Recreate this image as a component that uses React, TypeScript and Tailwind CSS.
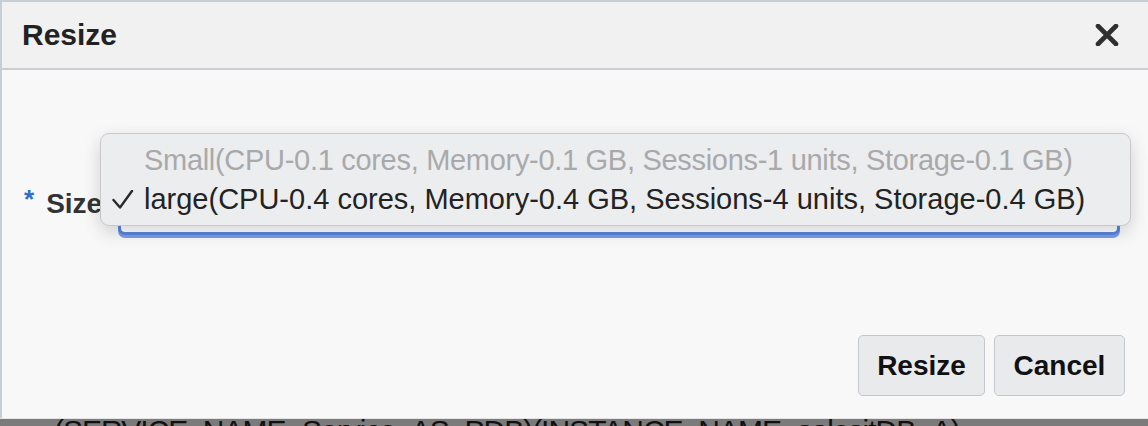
import React from 'react';

const options = [
  { label: 'Small(CPU-0.1 cores, Memory-0.1 GB, Sessions-1 units, Storage-0.1 GB)', selected: false },
  { label: 'large(CPU-0.4 cores, Memory-0.4 GB, Sessions-4 units, Storage-0.4 GB)', selected: true },
];

function CloseIcon() {
  return (
    <svg width="24" height="22" viewBox="0 0 24 22" aria-hidden="true">
      <path d="M3 2 L21 20 M21 2 L3 20" stroke="#2f2f2f" strokeWidth="4.6" strokeLinecap="round" />
    </svg>
  );
}

function Check() {
  return (
    <svg width="22" height="20" viewBox="0 0 22 20" aria-hidden="true">
      <path d="M1.5 10 L8 17.5 L20 1" fill="none" stroke="#2b2b2b" strokeWidth="2.4" strokeLinecap="round" strokeLinejoin="round" />
    </svg>
  );
}

export default function App() {
  return (
    <div className="w-[1148px] h-[426px] overflow-hidden bg-[#7b7b7b] flex flex-col font-['Liberation_Sans',Arial,sans-serif]">
      <div className="h-[418px] shrink-0 flex flex-col bg-[#f8f8f8] border-t-2 border-l-2 border-[#c7ced7] shadow-[0_1px_0_#e4e4e4]">
        {/* header */}
        <div className="h-[68px] shrink-0 flex items-center justify-between pl-[20px] pr-[29px] bg-[#f1f1f1] border-b-2 border-[#c9cdd1]">
          <h1 className="text-[30px] font-bold text-[#222] leading-none">Resize</h1>
          <CloseIcon />
        </div>

        {/* body */}
        <div className="relative flex-1 flex flex-col">
          <div className="flex items-start pt-[115px] pl-[22px]">
            <div className="w-[94px] shrink-0 flex items-start mt-[2px]">
              <span className="text-[26px] font-bold text-[#2a6fc9] leading-none mt-[-1px]">*</span>
              <span className="ml-[12px] text-[28px] font-bold text-[#333] leading-none pt-[3px]">Size</span>
            </div>
            <div className="w-[1002px] h-[50px] rounded-[7px] bg-white border-[3px] border-[#5a85dc] shadow-[0_3px_0_#7b9de6]" />
          </div>

          {/* open select list */}
          <div className="absolute left-[98px] top-[63px] w-[1031px] h-[93px] py-[7px] rounded-[9px] bg-[#ecedef] border border-[#c9c9cb] shadow-[0_6px_18px_rgba(0,0,0,0.16)]">
            {options.map((o) => (
              <div key={o.label} className="flex items-center h-[39px]">
                <div className="w-[43px] shrink-0 flex justify-center pl-[1px]">{o.selected && <Check />}</div>
                <span
                  className={
                    'text-[29px] leading-none whitespace-nowrap ' +
                    (o.selected ? 'text-[#232323]' : 'text-[#a9a9ab] tracking-[-0.3px]')
                  }
                >
                  {o.label}
                </span>
              </div>
            ))}
          </div>

          <div className="flex-1" />

          {/* footer buttons */}
          <div className="flex justify-end gap-[9px] pr-[23px] pb-[22px]">
            <button className="h-[61px] w-[127px] rounded-[5px] border border-[#c4c7cb] bg-[#e9eaec] text-[28px] font-bold text-[#111]">
              Resize
            </button>
            <button className="h-[61px] w-[131px] rounded-[5px] border border-[#c4c7cb] bg-[#e9eaec] text-[28px] font-bold text-[#111]">
              Cancel
            </button>
          </div>
        </div>
      </div>

      {/* page behind the dialog */}
      <div className="flex-1 overflow-hidden pl-[54px]">
        <div className="mt-[-2px] text-[30px] leading-none text-[#111] whitespace-nowrap tracking-[-1px]">
          (SERVICE_NAME=Service_AS_PDB)(INSTANCE_NAME=salesitDB=A)
        </div>
      </div>
    </div>
  );
}
